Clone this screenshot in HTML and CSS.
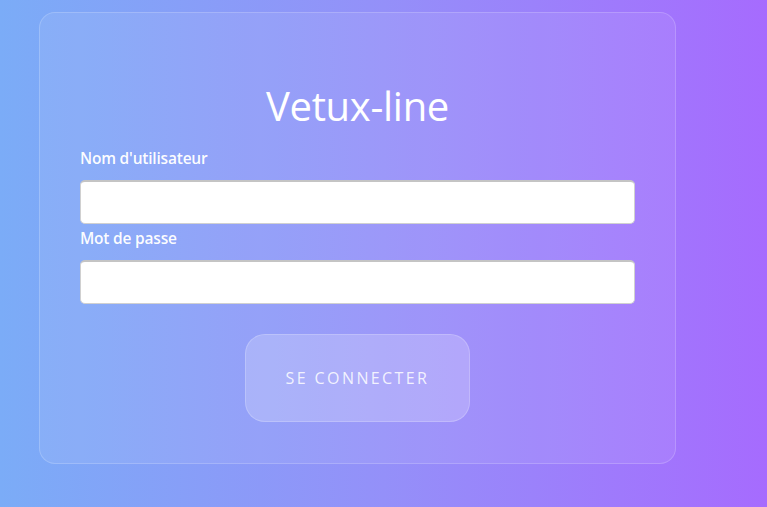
FILE: index.html
```html
<!DOCTYPE html>
<html lang="fr">
<head>
<meta charset="utf-8">
<title>Vetux-line</title>
<link rel="stylesheet" href="styles.css">
</head>
<body>
<div class="page">
  <form class="card">
    <h1 class="title">Vetux-line</h1>
    <label class="label" for="user">Nom d'utilisateur</label>
    <input class="field" id="user" type="text">
    <label class="label" for="pass">Mot de passe</label>
    <input class="field" id="pass" type="password">
    <div class="actions">
      <button class="btn" type="button">SE CONNECTER</button>
    </div>
  </form>
</div>
</body>
</html>
```
FILE: styles.css
```css
html, body {
  margin: 0;
  padding: 0;
  height: 100%;
}
body {
  font-family: "Open Sans", "Noto Sans", sans-serif;
  background: linear-gradient(to right, #7bacf7 0%, #9490f9 50%, #a66bfe 100%);
  color: #fff;
}
.page {
  padding: 12px 0 0 39px;
}
.card {
  box-sizing: border-box;
  width: 637px;
  height: 452px;
  padding: 65px 40px 0 40px;
  border-radius: 16px;
  background: rgba(255, 255, 255, 0.08);
  border: 1px solid rgba(255, 255, 255, 0.18);
  display: flex;
  flex-direction: column;
}
.title {
  margin: 0 0 13px 0;
  text-align: center;
  font-weight: 400;
  font-size: 40px;
  line-height: 56px;
  letter-spacing: -0.3px;
}
.label {
  font-size: 15.5px;
  font-weight: 600;
  line-height: 22px;
  margin-bottom: 11px;
  letter-spacing: -0.2px;
  color: rgba(255, 255, 255, 0.97);
}
.field {
  box-sizing: border-box;
  width: 555px;
  height: 44px;
  margin: 0 0 3px 0;
  border: 1px solid #d0d0d0;
  border-top: 2px solid #c4c4c4;
  border-radius: 5px;
  background: #fff;
}
.actions {
  display: flex;
  justify-content: center;
  margin-top: 27px;
}
.btn {
  width: 225px;
  height: 88px;
  border-radius: 20px;
  background: rgba(255, 255, 255, 0.2);
  border: 1px solid rgba(255, 255, 255, 0.2);
  color: rgba(255, 255, 255, 0.85);
  font-family: inherit;
  font-size: 16px;
  font-weight: 500;
  letter-spacing: 2.4px;
}
```
